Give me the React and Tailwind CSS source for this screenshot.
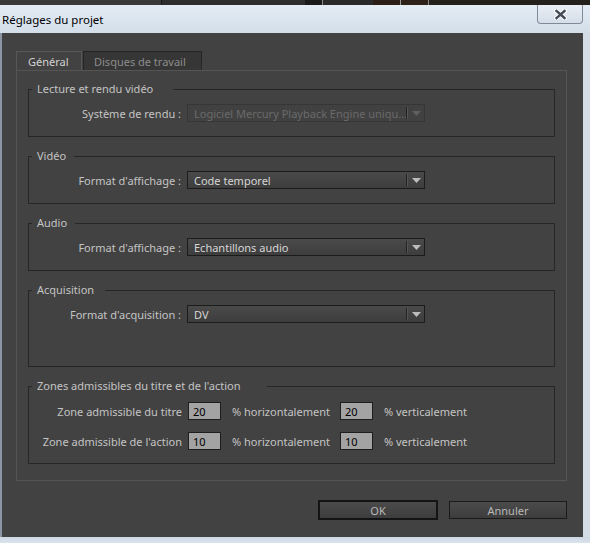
import React from "react";

const font = { fontFamily: '"Noto Sans", "Open Sans", sans-serif' };

function Arrow({ disabled }) {
  return (
    <svg width="9" height="5" viewBox="0 0 9 5" className="block">
      <path d="M0 0 H9 L4.5 5 Z" fill={disabled ? "#5f5f5f" : "#bdbdbd"} />
    </svg>
  );
}

function Select({ value, disabled }) {
  return (
    <div
      className={
        "flex h-[18px] w-[238px] items-stretch border " +
        (disabled
          ? "border-[#363636] bg-[#414141] text-[#6a6a6a]"
          : "border-[#1c1c1c] bg-gradient-to-b from-[#4a4a4a] to-[#3d3d3d] text-[#d6d6d6]")
      }
    >
      <div className="flex flex-1 items-center overflow-hidden whitespace-nowrap pl-[6px] text-[11px] leading-none">
        {value}
      </div>
      <div className="my-[2px] w-px bg-[#222]" />
      <div className="my-[2px] w-px bg-[#555]" />
      <div className="flex w-[16px] items-center justify-center">
        <Arrow disabled={disabled} />
      </div>
    </div>
  );
}

function Group({ title, titlePad, children, className = "" }) {
  return (
    <fieldset className={"border border-[#262626] px-0 " + className}>
      <legend
        className="ml-[3px] pl-[5px] text-[11px] leading-[14px] text-[#c4c4c4]"
        style={{ paddingRight: titlePad }}
      >
        {title}
      </legend>
      {children}
    </fieldset>
  );
}

function Row({ label, children }) {
  return (
    <div className="flex items-center">
      <div className="w-[153px] whitespace-nowrap pr-[1px] text-right text-[11px] leading-none text-[#c4c4c4]">
        {label}
      </div>
      <div className="ml-[5px]">{children}</div>
    </div>
  );
}

function NumBox({ v }) {
  return (
    <div className="flex h-[18px] w-[33px] items-center border border-[#1e1e1e] bg-[#a3a3a3] pl-[4px] text-[11px] leading-none text-black">
      {v}
    </div>
  );
}

function ZoneRow({ label, h, v }) {
  return (
    <div className="flex items-center">
      <div className="w-[153px] whitespace-nowrap text-right text-[11px] leading-none text-[#c4c4c4]">
        {label}
      </div>
      <div className="ml-[6px]">
        <NumBox v={h} />
      </div>
      <div className="ml-[11px] w-[108px] whitespace-nowrap text-[11px] leading-none text-[#c4c4c4]">
        % horizontalement
      </div>
      <NumBox v={v} />
      <div className="ml-[11px] whitespace-nowrap text-[11px] leading-none text-[#c4c4c4]">
        % verticalement
      </div>
    </div>
  );
}

export default function App() {
  return (
    <div className="flex h-[543px] w-[590px] flex-col overflow-hidden bg-[#2b2b2b]" style={font}>
      {/* desktop strip */}
      <div className="flex h-[5px] shrink-0">
        <div className="w-[161px] bg-[#3a3a3a]" />
        <div className="w-px bg-[#1a1a1a]" />
        <div className="w-[143px] bg-[#2e2e2e]" />
        <div className="w-[17px] bg-[#1b1b1b]" />
        <div className="w-px bg-[#8a8a8a]" />
        <div className="w-[50px] bg-[#2a2a2a]" />
        <div className="w-[27px] bg-[#2a1e16]" />
        <div className="w-px bg-[#9a9a9a]" />
        <div className="w-[27px] bg-[#2d2118]" />
        <div className="w-px bg-[#8a8a8a]" />
        <div className="flex-1 bg-[#24201c]" />
      </div>

      {/* title bar */}
      <div className="flex h-[28px] shrink-0 bg-gradient-to-b from-[#e4ecf5] to-[#d3deea]">
        <div className="flex flex-1 items-center pl-[2px] pt-[2px] text-[11.5px] text-black">
          Réglages du projet
        </div>
        <div className="flex h-[19px] w-[46px] items-center justify-center rounded-b-[4px] border border-t-0 border-[#7f8a99] bg-gradient-to-b from-[#e9eef4] to-[#d5dee9]">
          <svg width="13" height="11" viewBox="0 0 13 11">
            <path
              d="M2.5 2 L10.5 9 M10.5 2 L2.5 9"
              stroke="#ffffff"
              strokeWidth="4.4"
              strokeLinecap="square"
            />
            <path
              d="M2.5 2 L10.5 9 M10.5 2 L2.5 9"
              stroke="#454c58"
              strokeWidth="2.4"
              strokeLinecap="square"
            />
          </svg>
        </div>
        <div className="w-[7px]" />
      </div>

      {/* body */}
      <div className="flex flex-1 bg-[#d3dce7]">
        <div className="w-[2px] bg-[#8b95a3]" />
        <div className="flex flex-1 flex-col bg-[#424242] pl-[14px] pr-[16px] pt-[18px]">
          {/* tabs */}
          <div className="flex h-[19px] items-stretch">
            <div className="flex w-[66px] items-center border border-b-0 border-[#575757] bg-[#424242] pl-[11px] text-[11px] leading-none text-[#d2d2d2]">
              Général
            </div>
            <div className="ml-[1px] flex w-[119px] items-center border border-b-0 border-[#262626] bg-[#363636] pl-[10px] text-[11px] leading-none text-[#8c8c8c]">
              Disques de travail
            </div>
          </div>
          {/* panel */}
          <div className="flex flex-col border border-[#555555] px-[11px] pb-[16px] pt-[11px]">
            <Group title="Lecture et rendu vidéo" titlePad={20} className="pb-[14px] pt-[8px]">
              <Row label="Système de rendu :">
                <Select value="Logiciel Mercury Playback Engine uniqu..." disabled />
              </Row>
            </Group>
            <Group title="Vidéo" titlePad={8} className="mt-[12px] pb-[14px] pt-[8px]">
              <Row label="Format d'affichage :">
                <Select value="Code temporel" />
              </Row>
            </Group>
            <Group title="Audio" titlePad={8} className="mt-[12px] pb-[14px] pt-[8px]">
              <Row label="Format d'affichage :">
                <Select value="Echantillons audio" />
              </Row>
            </Group>
            <Group title="Acquisition" titlePad={11} className="mt-[12px] pb-[43px] pt-[8px]">
              <Row label="Format d'acquisition :">
                <Select value="DV" />
              </Row>
            </Group>
            <Group
              title="Zones admissibles du titre et de l'action"
              titlePad={26}
              className="mt-[12px] pb-[13px] pt-[9px]"
            >
              <div className="flex flex-col gap-[12px]">
                <ZoneRow label="Zone admissible du titre" h="20" v="20" />
                <ZoneRow label="Zone admissible de l'action" h="10" v="10" />
              </div>
            </Group>
          </div>
          {/* buttons */}
          <div className="mt-[19px] flex justify-end gap-[11px]">
            <button className="flex h-[20px] w-[120px] items-center justify-center border-2 border-[#141414] bg-gradient-to-b from-[#4b4b4b] to-[#3d3d3d] text-[11px] leading-none text-[#b9b9b9]">
              OK
            </button>
            <button className="mt-[1px] flex h-[18px] w-[118px] items-center justify-center border border-[#1a1a1a] bg-gradient-to-b from-[#4b4b4b] to-[#3d3d3d] text-[11px] leading-none text-[#b9b9b9]">
              Annuler
            </button>
          </div>
        </div>
        <div className="w-[7px] bg-[#d3dce7]" />
      </div>
      <div className="h-[6px] shrink-0 bg-gradient-to-b from-[#cdd7e3] to-[#dbe3ec]" />
    </div>
  );
}
